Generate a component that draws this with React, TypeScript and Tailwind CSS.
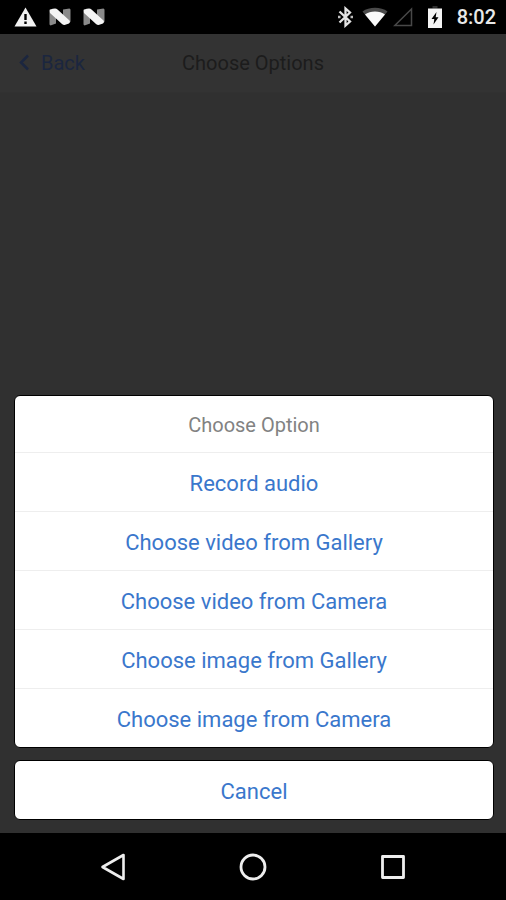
const options = [
  'Record audio',
  'Choose video from Gallery',
  'Choose video from Camera',
  'Choose image from Gallery',
  'Choose image from Camera',
];

function NougatIcon() {
  return (
    <svg width="22" height="18" viewBox="0 0 22 18">
      <path d="M0.500 3L7 8.500V15.500L1.500 17.500L0.500 16.500Z" fill="#8a8a8a" />
      <path d="M14 1.500L20.500 0.500L21.500 1.500V14L14 8.500Z" fill="#8a8a8a" />
      <path d="M0.500 2Q1 1 6 0.500Q7.500 0.500 8.500 1.500L20.500 12.500Q22 14 20 15.500L15.500 17Q14 17 13 16L1 5Z" fill="#f4f4f4" />
    </svg>
  );
}

function StatusBar() {
  return (
    <div className="flex h-[34px] items-center justify-between bg-black pl-[14px] pr-[10px]">
      <div className="flex items-center gap-3">
        <svg width="23" height="20" viewBox="0 0 23 20">
          <path d="M11.500 0.500L22.500 19.500H0.500Z" fill="#f2f2f2" />
          <path d="M10.300 7H12.700V13H10.300ZM10.300 14.500H12.700V17H10.300Z" fill="#000" />
        </svg>
        <NougatIcon />
        <NougatIcon />
      </div>
      <div className="flex items-center">
        <svg className="mr-[9px]" width="15" height="22" viewBox="0 0 15 22" fill="none" stroke="#e4e4e4" strokeWidth="2.300">
          <path d="M1.500 5.500L12 15.500L7.500 19.500V2.500L12 6.500L1.500 16.500" />
          <path d="M0 9.700H2.500V12.300H0ZM12.500 9.700H15V12.300H12.500Z" fill="#bdbdbd" stroke="none" />
        </svg>
        <svg className="mr-[5px]" width="26" height="20" viewBox="0 0 26 20">
          <path d="M13 19.500L0.500 4.500C7 -0.500 19 -0.500 25.500 4.500Z" fill="#4a4a4a" />
          <path d="M13 19.500L3 7.500C8 3.500 18 3.500 23 7.500Z" fill="#fafafa" />
        </svg>
        <svg className="mr-[15px]" width="20" height="20" viewBox="0 0 20 20" fill="none" stroke="#484848" strokeWidth="1.500">
          <path d="M18.500 2V18.500H1.800Z" />
        </svg>
        <svg className="mr-[15px]" width="14" height="22" viewBox="0 0 14 22">
          <path d="M4.500 0H9.500V2.500H4.500Z" fill="#2e2e2e" />
          <path d="M0 2.500H14V22H0Z" fill="#f4f4f4" />
          <path d="M8.500 6L3.500 13H6.300L5.500 18.500L10.500 11.300H7.700Z" fill="#000" />
        </svg>
        <span className="text-xl font-medium text-[#e8e8e8]">8:02</span>
      </div>
    </div>
  );
}

function Header() {
  return (
    <header className="grid h-[59px] grid-cols-[1fr_auto_1fr] items-center border-b border-[#313131] bg-[#333333] px-[18px] text-xl">
      <button type="button" className="flex items-center gap-[11px] text-[#1b263f]">
        <svg width="12" height="18" viewBox="0 0 12 18" fill="none" stroke="currentColor" strokeWidth="2.500">
          <path d="M10 1.500L3 8.500L10 15.500" />
        </svg>
        Back
      </button>
      <h1 className="text-[#1c1c1c]">Choose Options</h1>
    </header>
  );
}

function ActionSheet() {
  return (
    <div className="flex flex-col gap-3 pb-[13px] pl-[14px] pr-3 text-[22px] text-[#3a77cc]">
      <div className="overflow-hidden rounded-md border border-black bg-white">
        <h2 className="flex h-14 items-center justify-center pt-0.5 text-xl text-[#828282]">Choose Option</h2>
        {options.map(option => (
          <button key={option} type="button" className="block h-[59px] w-full border-t border-[#eeeeee] pt-0.5">
            {option}
          </button>
        ))}
      </div>
      <button type="button" className="h-[60px] rounded-md border border-black bg-white pt-0.5">
        Cancel
      </button>
    </div>
  );
}

function NavigationBar() {
  return (
    <nav className="flex h-[67px] items-center justify-center bg-black">
      <button type="button" aria-label="Back" className="flex w-[140px] justify-center">
        <svg width="28" height="30" viewBox="0 0 28 30" fill="none" stroke="#eeeeee" strokeWidth="2.600" strokeLinejoin="round">
          <path d="M24.500 3V27L3.500 15Z" />
        </svg>
      </button>
      <button type="button" aria-label="Home" className="flex w-[140px] justify-center">
        <svg width="28" height="28" viewBox="0 0 28 28" fill="none" stroke="#eeeeee" strokeWidth="2.800">
          <circle cx="14" cy="14" r="12" />
        </svg>
      </button>
      <button type="button" aria-label="Recent apps" className="flex w-[140px] justify-center">
        <svg width="26" height="26" viewBox="0 0 26 26" fill="none" stroke="#eeeeee" strokeWidth="2.800" strokeLinejoin="round">
          <path d="M2.500 2.500H23.500V23.500H2.500Z" />
        </svg>
      </button>
    </nav>
  );
}

export default function App() {
  return (
    <div className="flex min-h-screen flex-col bg-[#303030] font-['Roboto',sans-serif]">
      <StatusBar />
      <Header />
      <main className="flex flex-1 flex-col justify-end">
        <ActionSheet />
      </main>
      <NavigationBar />
    </div>
  );
}
